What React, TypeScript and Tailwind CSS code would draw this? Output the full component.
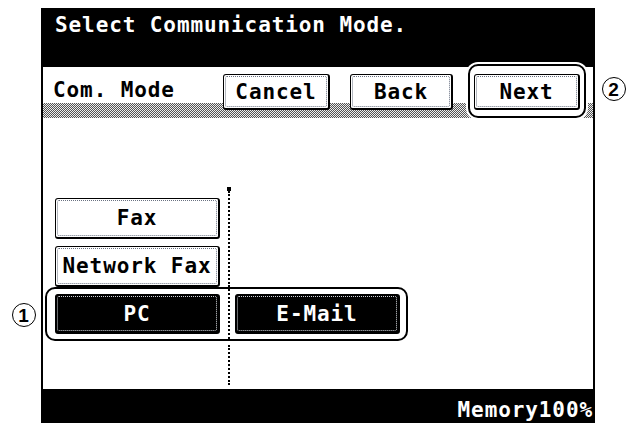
const mono =
  "font-['DejaVu_Sans_Mono','Liberation_Mono',monospace] font-bold text-[21px] leading-[20px] tracking-[0.9px]";

type KeyProps = {
  label: string;
  size: string;
  dark?: boolean;
};

const Key = ({ label, size, dark = false }: KeyProps) => {
  return (
    <div
      className={`${size} shrink-0 rounded-[3px] border border-r-2 border-b-2 border-black p-[1px] ${
        dark ? 'bg-black' : 'bg-white'
      }`}>
      <div
        className={`flex h-full w-full items-center justify-center rounded-[2px] border border-dotted ${
          dark ? 'border-gray-300 text-white' : 'border-gray-500 text-black'
        }`}>
        {label}
      </div>
    </div>
  );
};

const Callout = ({ n, pos }: { n: string; pos: string }) => (
  <div
    className={`absolute ${pos} flex h-[24px] w-[24px] items-center justify-center rounded-full border-[1.5px] border-black bg-white font-['Liberation_Sans',Arial,sans-serif] text-[19px] leading-none text-black`}>
    {n}
  </div>
);

export default function App() {
  return (
    <div className={`relative h-[423px] w-[630px] overflow-hidden bg-white ${mono}`}>
      <div className="ml-[41px] mt-[8px] flex h-[415px] w-[554px] flex-col bg-black">
        {/* title */}
        <div className="h-[59px] shrink-0 pl-[14px] pt-[7px] text-white">
          Select Communication Mode.
        </div>

        {/* header row, dithered strip along its bottom */}
        <div className="mx-[2px] flex h-[51px] shrink-0 items-start bg-[linear-gradient(to_bottom,#fff_36px,transparent_36px),repeating-conic-gradient(#555_0_25%,#eee_0_50%)] bg-[length:100%_100%,2px_2px] text-black">
          <div className="mt-[13px] w-[180px] shrink-0 pl-[10px]">Com. Mode</div>
          <div className="mt-[7px]">
            <Key label="Cancel" size="w-[107px] h-[36px]" />
          </div>
          <div className="ml-[20px] mt-[7px]">
            <Key label="Back" size="w-[103px] h-[36px]" />
          </div>
          <div className="relative -mt-[3px] ml-[15px] rounded-[10px] border-2 border-black bg-white px-[4px] pb-[6px] pt-[8px] shadow-[0_0_0_2px_white]">
            <Key label="Next" size="w-[106px] h-[36px]" />
          </div>
        </div>

        {/* body */}
        <div className="mx-[2px] flex h-[271px] shrink-0 flex-col bg-white text-black">
          <div className="h-[69px] shrink-0" />
          <div className="flex h-[100px] shrink-0">
            <div className="flex w-[184px] shrink-0 flex-col gap-[7px] pl-[12px] pt-[11px]">
              <Key label="Fax" size="w-[165px] h-[41px]" />
              <Key label="Network Fax" size="w-[165px] h-[41px]" />
            </div>
            <div className="flex w-[4px] flex-col items-center">
              <div className="h-[4px] w-[4px] bg-black" />
              <div className="w-0 flex-1 border-l-2 border-dotted border-black" />
            </div>
          </div>

          <div className="ml-[2px] flex w-fit items-center rounded-[10px] border-2 border-black py-[5px] pl-[8px] pr-[6px]">
            <Key label="PC" size="w-[165px] h-[40px]" dark />
            <div className="-my-[5px] ml-[8px] w-0 self-stretch border-l-2 border-dotted border-black" />
            <div className="ml-[5px]">
              <Key label="E-Mail" size="w-[165px] h-[40px]" dark />
            </div>
          </div>

          <div className="ml-[185px] mt-[4px] h-[40px] w-0 border-l-2 border-dotted border-black" />
        </div>

        {/* status */}
        <div className="flex flex-1 justify-end pr-[2px] pt-[11px] text-white">Memory100%</div>
      </div>

      <Callout n="1" pos="left-[12px] top-[303px]" />
      <Callout n="2" pos="left-[602px] top-[77px]" />
    </div>
  );
}
